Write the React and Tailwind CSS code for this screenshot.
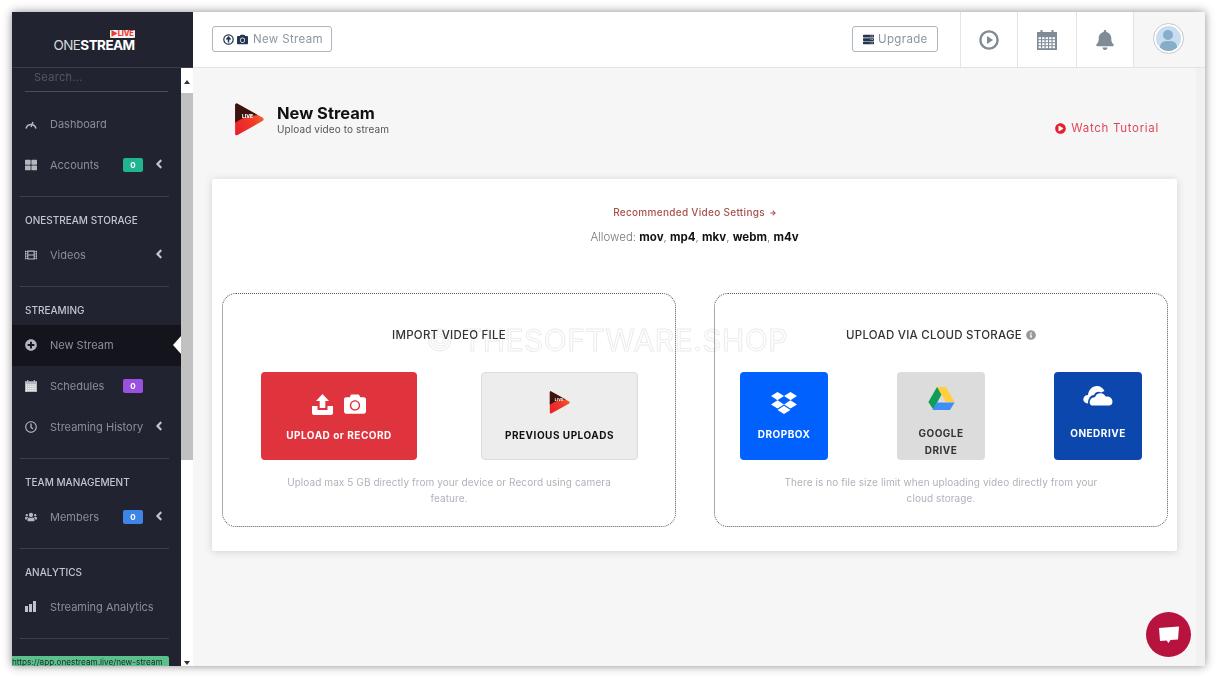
import { FaThLarge, FaFilm, FaPlusCircle, FaRegClock, FaUsers, FaAngleLeft, FaDropbox, FaCamera, FaBell, FaInfoCircle, FaServer, FaArrowRight, FaPlayCircle } from 'react-icons/fa';

const sans = 'font-["Inter",sans-serif]';

function LiveLogo({ size = 30 }) {
  return (
    <svg width={size} height={size * 1.09} viewBox="0 0 30 33">
      <defs>
        <linearGradient id="liveGrad" x1="0" y1="1" x2="1" y2="0.3">
          <stop offset="0" stopColor="#ea1c2a" />
          <stop offset="0.6" stopColor="#ef3a2a" />
          <stop offset="1" stopColor="#f4652a" />
        </linearGradient>
      </defs>
      <path d="M1 2 Q1 0 3 0.6 L29 15 Q30.5 16.5 29 18 L3 32.5 Q1 33 1 31 Z" fill="url(#liveGrad)" />
      <path d="M1 2 Q1 0 3 0.6 L24 12.3 Q12 12 1 20 Z" fill="#3a1410" />
      <text x="8" y="15" fontSize="5" fontWeight="800" fill="#fff" fontFamily="Inter, sans-serif">LIVE</text>
    </svg>
  );
}

function DriveLogo() {
  return (
    <svg width="27" height="24" viewBox="0 0 27 24">
      <path d="M9 0 H17.5 L9.5 15 L5.2 22.5 L0.4 15 Z" fill="#0f9d58" />
      <path d="M9 0 H18 L26.6 15 H17.7 Z" fill="#ffcf3f" />
      <path d="M8.7 15.5 H26.6 L22 23 H4.5 Z" fill="#3f8ef5" />
    </svg>
  );
}

function OneDriveIcon() {
  return (
    <svg width="30" height="21" viewBox="0 0 30 21" fill="#fff">
      <path d="M5 18.5 C1 18 0 15.5 0.4 13.5 C1 11 3 10 5 10 C5.5 5 9 1 14 1 C17.5 1 20 3 21.5 6 L18 7.5 C16 6 12.5 6.5 11 10 C8 10 5 13 5 18.5 Z" />
      <path d="M9 20.5 C6.5 20 6.3 17 7 15.5 C7.8 13 10 12 12 12.2 C13 9 16 7.5 19 8.5 C21 9 22 10.5 22.7 11.5 C26 11 29.5 13 29.5 16.5 C29.5 19 28 20.5 26 20.5 Z" />
    </svg>
  );
}

function DashIcon() {
  return (
    <svg width="12" height="10" viewBox="0 0 12 10" fill="none" stroke="#b5b7be" strokeWidth="1.5">
      <path d="M1.2 9 A5 5 0 0 1 10.8 9" strokeLinecap="round" />
      <path d="M6 8 L8 3" />
    </svg>
  );
}

function BarsIcon() {
  return (
    <svg width="11" height="11" viewBox="0 0 11 11" fill="#c0c2c8">
      <rect x="0" y="5" width="3" height="6" />
      <rect x="4" y="3" width="3" height="8" />
      <rect x="8" y="0" width="3" height="11" />
    </svg>
  );
}

function CalendarIcon({ size = 20, color = '#7f8b96' }) {
  const cells = [];
  for (let row = 0; row < 4; row++) {
    for (let col = 0; col < 5; col++) {
      cells.push(<rect key={`${row}-${col}`} x={1.6 + col * 3.5} y={7.2 + row * 3} width="2.4" height="2" fill="#fff" />);
    }
  }
  return (
    <svg width={size} height={size} viewBox="0 0 20 20">
      <rect x="0" y="2" width="20" height="18" fill={color} />
      <rect x="3.5" y="0" width="2" height="3" fill={color} />
      <rect x="14.5" y="0" width="2" height="3" fill={color} />
      {cells}
    </svg>
  );
}

function PlayRing() {
  return (
    <svg width="20" height="20" viewBox="0 0 20 20">
      <circle cx="10" cy="10" r="8.6" fill="none" stroke="#7f8b96" strokeWidth="2.4" />
      <path d="M8 6 L14 10 L8 14 Z" fill="#7f8b96" />
    </svg>
  );
}

function UploadRing() {
  return (
    <svg width="11" height="11" viewBox="0 0 11 11" fill="none" stroke="#22364f">
      <circle cx="5.5" cy="5.5" r="4.7" strokeWidth="1.2" />
      <path d="M5.5 8.4 V3.6 M3.4 5.6 L5.5 3.2 L7.6 5.6" strokeWidth="1.5" />
    </svg>
  );
}

function Divider() {
  return <div className="mr-[12px] ml-[8px] h-px bg-[#3a4045]" />;
}

function Heading({ children }) {
  return <div className="px-[13px] pt-[17px] pb-[8px] text-[10px] leading-[13px] font-medium text-[#c3c6ce]">{children}</div>;
}

function NavItem({ icon, label, badge, badgeColor, chevron, active }) {
  return (
    <div className={`relative flex h-[41px] items-center pl-[13px] ${active ? 'bg-[#14151c]' : ''}`}>
      <span className="flex w-[25px] shrink-0 -translate-y-[1px] text-[12px] text-[#b5b7be]">{icon}</span>
      <span className="text-[11px] whitespace-nowrap text-[#8a8e9c]">{label}</span>
      {badge && (
        <span className={`absolute top-[13px] left-[111px] flex h-[14px] w-[20px] items-center justify-center rounded-[2px] text-[8px] font-bold text-white ${badgeColor}`}>{badge}</span>
      )}
      {chevron && <FaAngleLeft className="absolute top-[12px] left-[140px] text-[14px] text-[#c3c6ce]" />}
      {active && <span className="absolute top-[11px] right-0 h-0 w-0 border-y-[9px] border-r-[8px] border-y-transparent border-r-white" />}
    </div>
  );
}

function Sidebar() {
  return (
    <aside className="relative flex h-full w-[169px] shrink-0 flex-col bg-[#212330]">
      <div className="relative z-10 -mr-[12px] flex h-[56px] shrink-0 items-center justify-center border-b border-[#3a3d4a] bg-[#212330] pr-[17px]">
        <div className="relative mt-[12px] text-[13.5px] leading-none tracking-[-0.55px] text-[#d8d8d8]">
          ONE<span className="font-bold text-white">STREAM</span>
          <span className="absolute -top-[9px] right-0 rounded-[1px] bg-[#f2f2f2] px-[1px] text-[7.5px] leading-[8px] font-extrabold tracking-[-0.2px] text-[#ee3b30]">▶LIVE</span>
        </div>
      </div>
      <div className="min-h-0 w-[169px] flex-1 overflow-hidden">
        <div className="mx-[13px] h-[24px] border-b border-[#4a4d58] pl-[9px] text-[11px] leading-[18px] tracking-[0.3px] text-[#555866]">Search...</div>
        <div className="h-[12px]" />
        <NavItem icon={<DashIcon />} label="Dashboard" />
        <NavItem icon={<FaThLarge />} label="Accounts" badge="0" badgeColor="bg-[#1fb58f]" chevron />
        <div className="h-[10px]" />
        <Divider />
        <Heading>ONESTREAM STORAGE</Heading>
        <NavItem icon={<FaFilm />} label="Videos" chevron />
        <div className="h-[10px]" />
        <Divider />
        <Heading>STREAMING</Heading>
        <NavItem icon={<FaPlusCircle />} label="New Stream" active />
        <NavItem icon={<CalendarIcon size={12} color="#b5b7be" />} label="Schedules" badge="0" badgeColor="bg-[#9b51e0]" />
        <NavItem icon={<FaRegClock />} label="Streaming History" chevron />
        <div className="h-[10px]" />
        <Divider />
        <Heading>TEAM MANAGEMENT</Heading>
        <NavItem icon={<FaUsers />} label="Members" badge="0" badgeColor="bg-[#3d85e6]" chevron />
        <div className="h-[10px]" />
        <Divider />
        <Heading>ANALYTICS</Heading>
        <NavItem icon={<BarsIcon />} label="Streaming Analytics" />
        <div className="h-[10px]" />
        <Divider />
      </div>
      <div className="absolute bottom-0 left-0 h-[10px] w-[157px] overflow-hidden rounded-tr-[2px] bg-[#5cc08c] pt-[2px] text-[8.2px] leading-[8px] whitespace-nowrap text-[#1d2b26]">https://app.onestream.live/new-stream</div>
    </aside>
  );
}

function Scrollbar() {
  return (
    <div className="mt-[59px] flex h-[595px] w-[12px] shrink-0 flex-col items-center bg-white">
      <div className="flex h-[22px] items-center"><span className="h-0 w-0 border-x-[3px] border-b-[4px] border-x-transparent border-b-[#333]" /></div>
      <div className="h-[367px] w-full bg-[#c1c1c1]" />
      <div className="flex-1" />
      <div className="flex h-[6px] items-center"><span className="h-0 w-0 border-x-[3px] border-t-[4px] border-x-transparent border-t-[#333]" /></div>
    </div>
  );
}

function HeaderIconCell({ children, w }) {
  return <div className={`flex h-full items-center justify-center border-l border-[#e3e3e3] text-[#7f8b96] ${w}`}>{children}</div>;
}

function Header() {
  return (
    <header className="flex h-[56px] shrink-0 items-center border-b border-[#e3e3e3] bg-white pl-[19px]">
      <div className="-mt-[1px] flex h-[26px] w-[120px] items-center gap-[3px] rounded-[3px] border border-[#adb5bd] pt-[1px] pl-[10px] text-[11.5px] tracking-[0.35px] text-[#8c96a0]">
        <UploadRing />
        <FaCamera className="mr-[2px] text-[11px] text-[#22364f]" />
        New Stream
      </div>
      <div className="-mt-[1px] ml-auto flex h-[26px] w-[86px] items-center gap-[4px] rounded-[3px] border border-[#adb5bd] pt-[1px] pl-[10px] text-[11.5px] tracking-[0.35px] text-[#8c96a0]">
        <FaServer className="text-[11px] text-[#22364f]" />
        Upgrade
      </div>
      <div className="ml-[22px] flex h-full">
        <HeaderIconCell w="w-[57px]"><PlayRing /></HeaderIconCell>
        <HeaderIconCell w="w-[59px]"><CalendarIcon /></HeaderIconCell>
        <HeaderIconCell w="w-[57px]"><FaBell className="text-[20px]" /></HeaderIconCell>
        <div className="flex h-full w-[72px] items-start justify-start border-l border-[#e3e3e3] bg-[#f6f6f6] pt-[11px] pl-[19px]">
          <div className="flex h-[31px] w-[31px] items-center justify-center rounded-full border border-[#c4c8cc] bg-white">
            <div className="relative h-[25px] w-[25px] overflow-hidden rounded-full bg-[#c9dcf0]">
              <span className="absolute top-[4px] left-[7px] h-[10px] w-[10px] rounded-full bg-[#87aec9]" />
              <span className="absolute top-[15px] left-[4px] h-[12px] w-[17px] rounded-full bg-[#87aec9]" />
            </div>
          </div>
        </div>
      </div>
    </header>
  );
}

function ActionButton({ color, children, w = 'w-[88px]' }) {
  return <div className={`flex h-[88px] shrink-0 flex-col items-center rounded-[4px] text-[10px] font-bold tracking-[0.5px] ${w} ${color}`}>{children}</div>;
}

function DashedBox({ title, info, note, children }) {
  return (
    <div className="flex h-[234px] flex-col items-center rounded-[14px] border border-dotted border-[#555] pt-[34px]">
      <div className="flex h-[14px] items-center gap-[4px] text-[11.5px] leading-[14px] font-medium tracking-[0.25px] text-[#333]">
        {title}
        {info && <FaInfoCircle className="text-[10px] text-[#999]" />}
      </div>
      {children}
      <p className="mt-[14px] w-[340px] text-center text-[10px] leading-[16px] tracking-[0.08px] text-[#aeb3ba]">{note}</p>
    </div>
  );
}

function App() {
  return (
    <div className={`h-[678px] w-[1216px] overflow-hidden bg-white pt-[12px] pl-[12px] ${sans}`}>
      <div className="relative flex h-[654px] w-[1193px] shadow-[0_0_9px_rgba(0,0,0,0.45)]">
        <Sidebar />
        <Scrollbar />
        <div className="flex min-w-0 flex-1 flex-col bg-[#f6f6f6]">
          <Header />
          <main className="min-h-0 flex-1 pt-[33px] pr-[28px] pl-[19px]">
            <div className="flex h-[78px] items-start">
              <div className="mt-[2px] ml-[22px] flex items-center gap-[13px]">
                <LiveLogo />
                <div className="pt-[1px]">
                  <div className="text-[16.5px] leading-[19px] font-bold text-[#111]">New Stream</div>
                  <div className="text-[10px] leading-[13px] tracking-[0.1px] text-[#555]">Upload video to stream</div>
                </div>
              </div>
              <div className="mt-[19px] ml-auto flex items-center gap-[5px] pr-[18px] text-[11.5px] tracking-[0.7px] text-[#e0465a]">
                <FaPlayCircle className="text-[11px] text-[#e3202e]" />
                Watch Tutorial
              </div>
            </div>
            <section className="h-[372px] rounded-[2px] bg-white px-[10px] shadow-[0_1px_8px_rgba(0,0,0,0.15)]">
              <div className="pt-[27px] text-center text-[10px] leading-[12px] font-medium tracking-[0.3px] text-[#a5504c]">
                Recommended Video Settings <FaArrowRight className="ml-[2px] inline text-[6px]" />
              </div>
              <div className="mt-[12px] text-center text-[11.5px] leading-[14px] font-light text-[#777]">
                Allowed: <b className="font-bold text-[#111]">mov</b>, <b className="font-bold text-[#111]">mp4</b>, <b className="font-bold text-[#111]">mkv</b>, <b className="font-bold text-[#111]">webm</b>, <b className="font-bold text-[#111]">m4v</b>
              </div>
              <div className="mt-[49px] grid w-[946px] grid-cols-[454px_454px] gap-[38px]">
                <DashedBox title="IMPORT VIDEO FILE" note="Upload max 5 GB directly from your device or Record using camera feature.">
                  <div className="mt-[30px] ml-[1px] flex gap-[64px]">
                    <ActionButton w="w-[156px]" color="bg-[#df343d] text-white">
                      <div className="mt-[20px] flex h-[24px] items-center gap-[11px]">
                        <svg width="21" height="21" viewBox="0 0 21 21" fill="#fff">
                          <path d="M10.5 0 L17 7 H13.3 V14 H7.7 V7 H4 Z" />
                          <path d="M0 12 H5.5 V16 H15.5 V12 H21 V19 Q21 21 19 21 H2 Q0 21 0 19 Z" />
                        </svg>
                        <FaCamera className="text-[22px]" />
                      </div>
                      <div className="mt-[12px]">UPLOAD or RECORD</div>
                    </ActionButton>
                    <ActionButton w="w-[157px]" color="border border-[#dcdcdc] bg-[#ededed] text-[#111]">
                      <div className="mt-[18px]"><LiveLogo size={21} /></div>
                      <div className="mt-[14px]">PREVIOUS UPLOADS</div>
                    </ActionButton>
                  </div>
                </DashedBox>
                <DashedBox title="UPLOAD VIA CLOUD STORAGE" info note="There is no file size limit when uploading video directly from your cloud storage.">
                  <div className="mt-[30px] flex w-[402px] justify-between">
                    <ActionButton color="bg-[#0061fe] text-white">
                      <FaDropbox className="mt-[18px] text-[26px]" />
                      <div className="mt-[11px]">DROPBOX</div>
                    </ActionButton>
                    <ActionButton color="bg-[#dcdcdc] text-[#333]">
                      <div className="mt-[15px]"><DriveLogo /></div>
                      <div className="mt-[14px] text-center leading-[17px]">GOOGLE<br />DRIVE</div>
                    </ActionButton>
                    <ActionButton color="bg-[#0b47ad] text-white">
                      <div className="mt-[13px]"><OneDriveIcon /></div>
                      <div className="mt-[20px]">ONEDRIVE</div>
                    </ActionButton>
                  </div>
                </DashedBox>
              </div>
            </section>
          </main>
        </div>
        <div className="absolute top-[56px] right-0 bottom-0 w-[9px] bg-[#f1f1f1]" />
        <div className="pointer-events-none absolute top-[312px] left-[414px] text-[30px] leading-[32px] tracking-[0.5px] whitespace-nowrap text-transparent mix-blend-multiply [-webkit-text-stroke:1px_#ececec]">© THESOFTWARE.SHOP</div>
        <div className="absolute top-[600px] left-[1134px] flex h-[45px] w-[45px] items-center justify-center rounded-full bg-[#b8133f]">
          <svg width="22" height="18" viewBox="0 0 22 18" fill="#fff"><path d="M1 2 L21 0.5 L20 13.5 L12.5 14 L10.5 17 L8.5 14.5 L2 15 Z" /></svg>
        </div>
      </div>
    </div>
  );
}

export default App;
